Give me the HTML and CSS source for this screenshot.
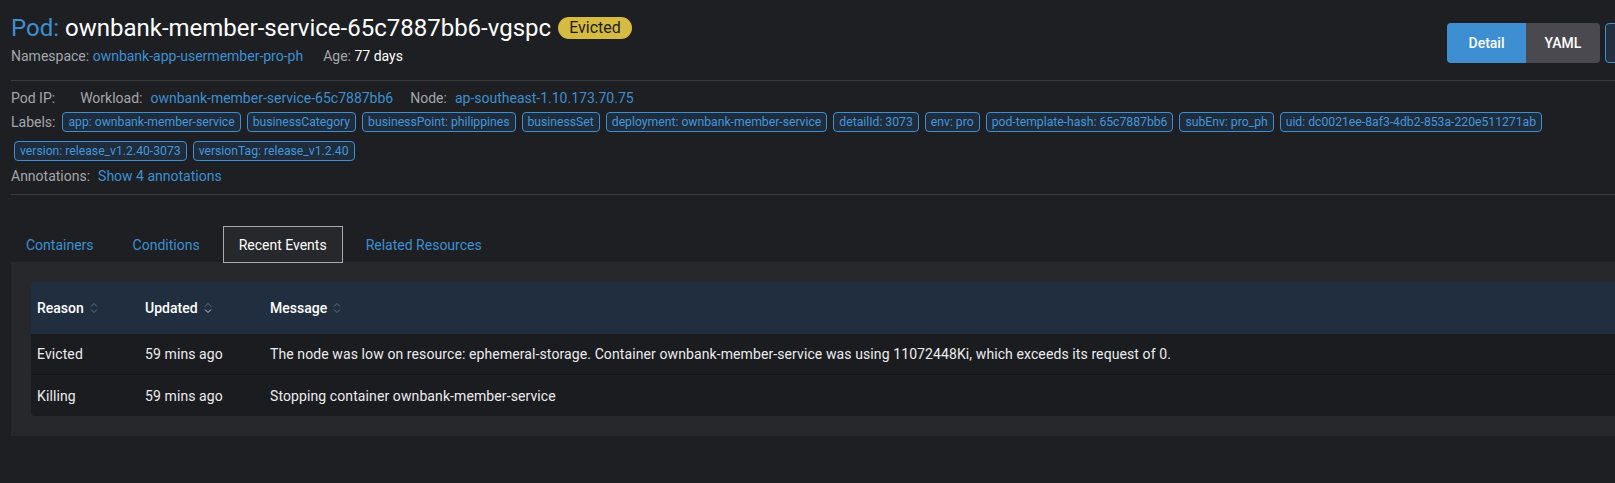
FILE: index.html
```html
<!DOCTYPE html>
<html lang="en">
<head>
<meta charset="utf-8">
<title>Pod: ownbank-member-service-65c7887bb6-vgspc</title>
<link rel="stylesheet" href="styles.css">
</head>
<body>
<div class="page">
  <header class="masthead">
    <div class="title-block">
      <h1 class="title"><span class="name"><span class="kind">Pod:</span> ownbank-member-service-65c7887bb6-vgspc</span><span class="badge">Evicted</span></h1>
      <div class="subtitle">
        <span><span class="muted">Namespace:</span> <a class="link" href="#">ownbank-app-usermember-pro-ph</a></span>
        <span><span class="muted">Age:</span> <span class="value">77 days</span></span>
      </div>
    </div>
    <div class="actions">
      <div class="btn-group">
        <button class="btn active">Detail</button>
        <button class="btn yaml">YAML</button>
      </div>
      <button class="btn outline" aria-label="more"></button>
    </div>
  </header>

  <div class="rule"></div>

  <section class="meta">
    <div class="meta-row info-row">
      <span class="item"><span class="muted key">Pod IP:</span></span>
      <span class="item"><span class="muted key">Workload:</span><a class="link" href="#">ownbank-member-service-65c7887bb6</a></span>
      <span class="item"><span class="muted key">Node:</span><a class="link" href="#">ap-southeast-1.10.173.70.75</a></span>
    </div>
    <div class="meta-row labels-row">
      <span class="muted labels-key">Labels:</span>
      <span class="tag">app: ownbank-member-service</span>
      <span class="tag">businessCategory</span>
      <span class="tag">businessPoint: philippines</span>
      <span class="tag">businessSet</span>
      <span class="tag">deployment: ownbank-member-service</span>
      <span class="tag">detailId: 3073</span>
      <span class="tag">env: pro</span>
      <span class="tag">pod-template-hash: 65c7887bb6</span>
      <span class="tag">subEnv: pro_ph</span>
      <span class="tag">uid: dc0021ee-8af3-4db2-853a-220e511271ab</span>
      <span class="tag">version: release_v1.2.40-3073</span>
      <span class="tag">versionTag: release_v1.2.40</span>
    </div>
    <div class="meta-row annot-row">
      <span class="muted key">Annotations:</span><a class="link" href="#">Show 4 annotations</a>
    </div>
  </section>

  <div class="rule rule-bottom"></div>

  <nav class="tabs">
    <a class="tab" href="#">Containers</a>
    <a class="tab" href="#">Conditions</a>
    <a class="tab current" href="#">Recent Events</a>
    <a class="tab" href="#">Related Resources</a>
  </nav>

  <div class="tab-panel">
    <table class="events">
      <colgroup>
        <col class="col-reason">
        <col class="col-updated">
        <col>
      </colgroup>
      <thead>
        <tr>
          <th><span class="th-inner">Reason <svg class="sort" viewBox="0 0 8 14" width="8" height="14"><path d="M1 5.5 L4 2.5 L7 5.5" /><path d="M1 8.5 L4 11.5 L7 8.5" /></svg></span></th>
          <th><span class="th-inner">Updated <svg class="sort desc" viewBox="0 0 8 14" width="8" height="14"><path d="M1 5.5 L4 2.5 L7 5.5" /><path class="on" d="M1 8.5 L4 11.5 L7 8.5" /></svg></span></th>
          <th><span class="th-inner">Message <svg class="sort" viewBox="0 0 8 14" width="8" height="14"><path d="M1 5.5 L4 2.5 L7 5.5" /><path d="M1 8.5 L4 11.5 L7 8.5" /></svg></span></th>
        </tr>
      </thead>
      <tbody>
        <tr>
          <td>Evicted</td>
          <td>59 mins ago</td>
          <td>The node was low on resource: ephemeral-storage. Container ownbank-member-service was using 11072448Ki, which exceeds its request of 0.</td>
        </tr>
        <tr>
          <td>Killing</td>
          <td>59 mins ago</td>
          <td>Stopping container ownbank-member-service</td>
        </tr>
      </tbody>
    </table>
  </div>
</div>
</body>
</html>
```

FILE: styles.css
```css
* { box-sizing: border-box; }

html, body {
  margin: 0;
  background: #1e1f23;
}

body {
  overflow: hidden;
  font-family: Roboto, "Noto Sans", sans-serif;
  font-size: 14px;
  color: #e8e8ea;
}

.page {
  width: 1650px;
  margin-left: 11px;
}

/* ---------- header ---------- */
.masthead {
  display: flex;
  justify-content: space-between;
  align-items: flex-start;
  padding-top: 12px;
}

.title {
  margin: 0;
  display: flex;
  align-items: center;
  font-size: 24px;
  line-height: 32px;
  font-weight: 400;
  color: #ffffff;
}

.kind { color: #3d8fd1; }

.badge {
  margin-left: 7px;
  height: 22px;
  line-height: 22px;
  padding: 0 11px;
  border-radius: 11px;
  background: #d5bb42;
  color: #1d1d1f;
  font-size: 16px;
}

.subtitle {
  margin-top: 2px;
  display: flex;
  gap: 20px;
  line-height: 20px;
}

.muted { color: #a4a6ab; }
.value { color: #ffffff; }

.link {
  color: #3d8fd1;
  text-decoration: none;
}

.actions {
  display: flex;
  gap: 5px;
  margin-top: 11px;
}

.btn-group {
  display: flex;
  border-radius: 4px;
  overflow: hidden;
}

.btn {
  height: 40px;
  border: 0;
  padding: 0;
  font-family: inherit;
  font-size: 14px;
  font-weight: 500;
  color: #ffffff;
  background: #4a494f;
}

.btn.active { width: 79px; background: #3d8fd1; }
.btn.yaml { width: 74px; }

.btn.outline {
  width: 56px;
  background: #22303f;
  border: 1px solid #3d8fd1;
  border-radius: 4px;
}

.rule {
  height: 1px;
  background: #3a3b40;
  margin-top: 14px;
}

.rule-bottom { margin-top: 8px; }

/* ---------- meta ---------- */
.meta { padding-top: 7px; }

.meta-row {
  display: flex;
  align-items: center;
  line-height: 20px;
}

.info-row { gap: 17px; }

.key { margin-right: 8px; }

.labels-row {
  margin-top: 4px;
  flex-wrap: wrap;
  row-gap: 9px;
}

.labels-key { margin-right: 4px; }

.tag {
  margin: 0 3px;
  height: 20px;
  line-height: 18px;
  padding: 0 5px;
  border: 1px solid #3d8fd1;
  border-radius: 4px;
  background: #1f2c3b;
  color: #4497db;
  font-size: 12.2px;
  white-space: nowrap;
}

.annot-row { margin-top: 5px; }

/* ---------- tabs ---------- */
.tabs {
  display: flex;
  gap: 7px;
  margin-top: 31px;
  margin-left: -1px;
}

.tab {
  height: 37px;
  padding: 0 15px;
  display: flex;
  align-items: center;
  border: 1px solid transparent;
  color: #3d8fd1;
  text-decoration: none;
  font-size: 14px;
}

.tab.current {
  color: #ffffff;
  border-color: #a9abb0;
  background: #27282c;
}

.tab-panel {
  margin-top: -1px;
  background: #27282c;
  padding: 20px;
}

/* ---------- table ---------- */
.events {
  width: 100%;
  table-layout: fixed;
  border-collapse: separate;
  border-spacing: 0;
  border-radius: 4px;
  overflow: hidden;
}

.col-reason { width: 108px; }
.col-updated { width: 125px; }

.events th {
  height: 52px;
  padding: 0 6px;
  background: #202e3f;
  text-align: left;
  font-weight: 500;
  color: #ffffff;
}

.th-inner {
  display: inline-flex;
  align-items: center;
  gap: 6px;
}

.sort {
  fill: none;
  stroke: #6b6e75;
  stroke-width: 1;
}

.sort .on { stroke: #d0d2d6; }

.events td {
  height: 41px;
  padding: 0 6px;
  background: #1b1c20;
  color: #ececee;
  white-space: nowrap;
  letter-spacing: 0.1px;
}

.events tbody tr:first-child td {
  border-bottom: 1px solid #131417;
}
```
